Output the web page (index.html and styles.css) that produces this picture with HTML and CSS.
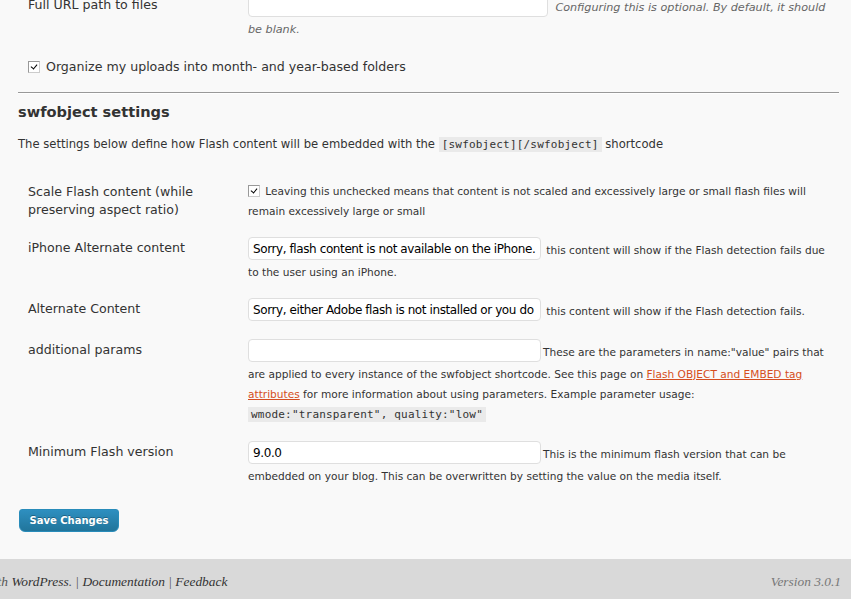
FILE: index.html
```html
<!DOCTYPE html>
<html lang="en">
<head>
    <meta charset="UTF-8">
    <title>Media Settings</title>
    <link rel="stylesheet" href="styles.css">
</head>
<body>
    <div class="wrap">
        <table class="form-table first">
            <tr>
                <th>Full URL path to files</th>
                <td>
                    <input type="text" class="regular-text wide" value="">
                    <span class="description">Configuring this is optional. By default, it should be blank.</span>
                </td>
            </tr>
            <tr>
                <td colspan="2" class="check-row">
                    <span class="checkbox checked"></span> Organize my uploads into month- and year-based folders
                </td>
            </tr>
        </table>

        <hr>

        <h3>swfobject settings</h3>
        <p class="intro">The settings below define how Flash content will be embedded with the <code>[swfobject][/swfobject]</code> shortcode</p>

        <table class="form-table">
            <tr>
                <th>Scale Flash content (while preserving aspect ratio)</th>
                <td><span class="checkbox checked"></span> Leaving this unchecked means that content is not scaled and excessively large or small flash files will remain excessively large or small</td>
            </tr>
            <tr>
                <th>iPhone Alternate content</th>
                <td><input type="text" class="regular-text" value="Sorry, flash content is not available on the iPhone."> this content will show if the Flash detection fails due to the user using an iPhone.</td>
            </tr>
            <tr>
                <th>Alternate Content</th>
                <td><input type="text" class="regular-text" value="Sorry, either Adobe flash is not installed or you do not have it enabled"> this content will show if the Flash detection fails.</td>
            </tr>
            <tr>
                <th>additional params</th>
                <td><input type="text" class="regular-text" value="">These are the parameters in name:"value" pairs that are applied to every instance of the swfobject shortcode. See this page on <a href="#">Flash OBJECT and EMBED tag attributes</a> for more information about using parameters. Example parameter usage: <code>wmode:"transparent", quality:"low"</code></td>
            </tr>
            <tr>
                <th>Minimum Flash version</th>
                <td><input type="text" class="regular-text" value="9.0.0">This is the minimum flash version that can be embedded on your blog. This can be overwritten by setting the value on the media itself.</td>
            </tr>
        </table>

        <p class="submit">
            <button type="button" class="button-primary">Save Changes</button>
        </p>
    </div>

    <div id="footer">
        <p class="footer-left">Thank you for creating with <a href="#">WordPress</a>. | <a href="#">Documentation</a> | <a href="#">Feedback</a></p>
        <p class="footer-upgrade">Version 3.0.1</p>
    </div>
</body>
</html>
```

FILE: styles.css
```css
html, body {
    margin: 0;
    padding: 0;
    background: #f9f9f9;
}
body {
    font-family: "DejaVu Sans", "Lucida Grande", Verdana, sans-serif;
    font-size: 13px;
    color: #333;
    overflow: hidden;
    height: 599px;
    display: flex;
    flex-direction: column;
}
.wrap {
    margin: -14px 12px 0 18px;
    flex: 1;
}
.form-table {
    width: 100%;
    border-collapse: collapse;
}
.form-table th {
    width: 200px;
    padding: 10px 10px 8px;
    text-align: left;
    vertical-align: top;
    font-weight: normal;
    font-size: 12.6px;
    line-height: 18px;
}
.form-table td {
    padding: 8px 10px;
    vertical-align: top;
    font-size: 10.6px;
    line-height: 20px;
}
.form-table .check-row {
    font-size: 12.6px;
    padding-top: 9px;
}
.regular-text {
    width: 293px;
    height: 23px;
    box-sizing: border-box;
    border: 1px solid #dfdfdf;
    border-radius: 4px;
    background: #fff;
    padding: 2px 4px;
    font-family: "DejaVu Sans", "Lucida Grande", sans-serif;
    font-size: 12px;
    letter-spacing: -0.4px;
    color: #000;
    vertical-align: 1px;
    margin: 0 2px 2px 0;
}
.regular-text.wide {
    width: 300px;
}
.description {
    font-style: italic;
    color: #666;
    font-size: 11.2px;
    margin-left: 2px;
}
.checkbox {
    display: inline-block;
    width: 12px;
    height: 12px;
    box-sizing: border-box;
    border: 1px solid #999;
    border-right-color: #ccc;
    border-bottom-color: #ccc;
    background: #fff;
    vertical-align: -2px;
    margin-right: 2px;
    position: relative;
}
.checkbox.checked::after {
    content: "";
    position: absolute;
    left: 2px;
    top: 2px;
    width: 5px;
    height: 3px;
    border-left: 1.5px solid #000;
    border-bottom: 1.5px solid #000;
    transform: rotate(-50deg);
}
hr {
    border: 0;
    border-top: 1px solid #999;
    border-bottom: 1px solid #fff;
    margin: 7px 0 0;
}
h3 {
    font-size: 14.6px;
    font-weight: bold;
    margin: 8px 0 0;
    line-height: 20px;
}
.intro {
    font-size: 11.6px;
    margin: 12px 0 18px;
    line-height: 20px;
}
code {
    font-family: "DejaVu Sans Mono", Monaco, monospace;
    font-size: 11px;
    letter-spacing: 0.2px;
    background: #eaeaea;
    padding: 1px 3px;
}
a {
    color: #d54e21;
}
.submit {
    margin: 15px 0 0 1px;
    padding: 0;
}
.button-primary {
    font-family: "DejaVu Sans", "Lucida Grande", sans-serif;
    font-size: 10px;
    font-weight: bold;
    color: #fff;
    width: 100px;
    height: 23px;
    border: 1px solid #298cba;
    border-radius: 3px 3px 6px 6px;
    background: linear-gradient(to bottom, #2e8fc0, #21759b);
    text-shadow: 0 -1px 0 rgba(0,0,0,0.3);
    padding: 0;
}
#footer {
    background: #d9d9d9;
    height: 40px;
    flex-shrink: 0;
    box-sizing: border-box;
    padding: 5px 10px 0 0;
    display: flex;
    align-items: center;
    font-family: "Liberation Serif", Georgia, serif;
    font-style: italic;
    font-size: 13.4px;
    color: #555;
}
#footer p {
    margin: 0;
    white-space: nowrap;
    flex-shrink: 0;
}
#footer a {
    color: #333;
    text-decoration: none;
}
#footer .footer-left {
    margin-left: -141px;
}
#footer .footer-upgrade {
    margin-left: auto;
    color: #777;
}
```
